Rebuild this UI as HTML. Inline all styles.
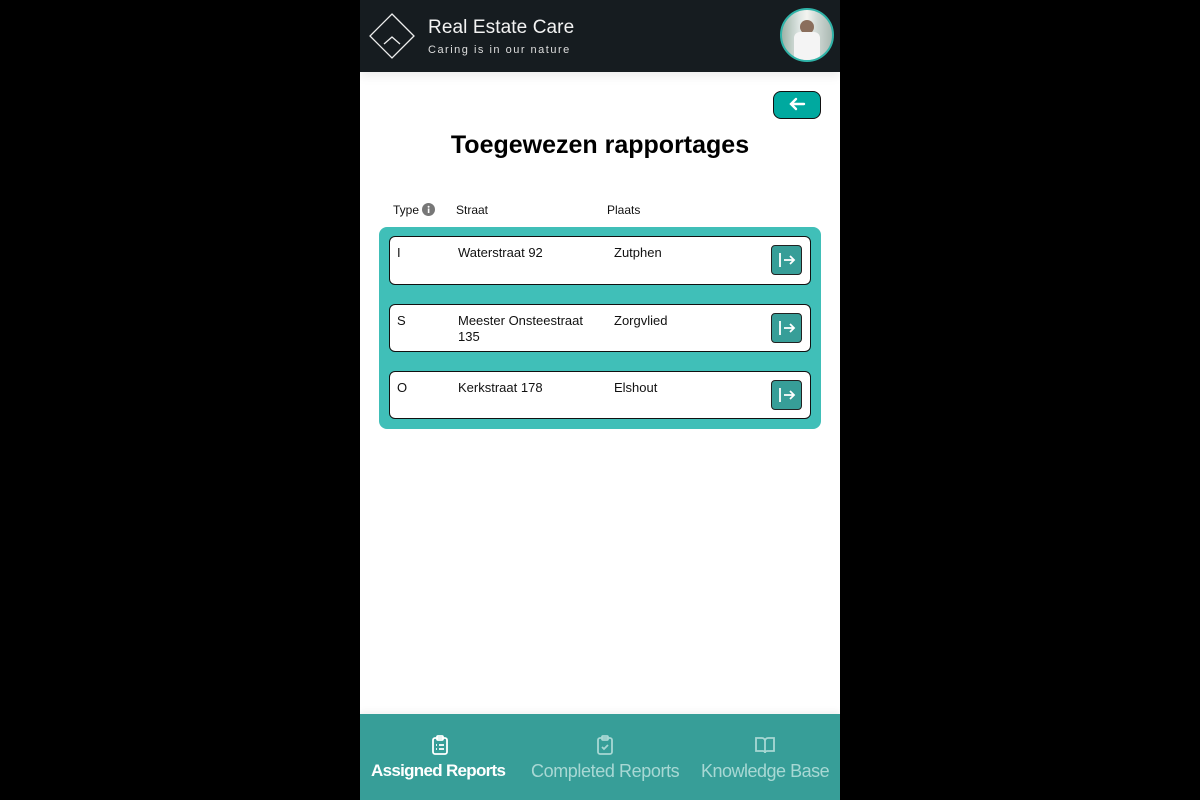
<!DOCTYPE html>
<html><head><style>
body{margin:0;background:#000;width:1200px;height:800px;overflow:hidden;font-family:"Liberation Sans",sans-serif}
#app{position:absolute;left:360px;top:0;width:480px;height:800px;background:#fff}
.hdr{position:absolute;left:0;top:0;width:480px;height:72px;background:#161c20;box-shadow:0 4px 10px rgba(0,0,0,.08)}
.t1{position:absolute;left:68px;top:17px;color:#f2f2f2;font-size:19px;letter-spacing:.1px}
.t2{position:absolute;left:68px;top:44px;color:#ddd;font-size:11px;letter-spacing:1.5px}
.av{position:absolute;left:420px;top:8px;width:50px;height:50px;border-radius:50%;border:2px solid #2fb3a8;background:linear-gradient(90deg,#9fb3a8 0%,#dfe6e3 35%,#f4f4f0 50%,#cfd8d4 70%,#aab9b2 100%);overflow:hidden}
.back{position:absolute;left:413px;top:91px;width:46px;height:26px;border:1px solid #111;border-radius:8px;background:#00a99f}
h1{position:absolute;left:0;width:480px;top:131px;margin:0;text-align:center;font-size:25px;font-weight:bold;letter-spacing:0}
.th{position:absolute;top:203px;font-size:12px;color:#111}
.box{position:absolute;left:19px;top:227px;width:442px;height:202px;background:#40bfb8;border-radius:8px}
.row{position:absolute;left:10px;width:420px;background:#fff;border:1px solid #111;border-radius:6px}
.row span{position:absolute;top:8px;font-size:13px;color:#111;line-height:16px}
.go{position:absolute;left:381px;top:8px;width:31px;height:30px;background:#379e98;border:1px solid #222;border-radius:4px;box-sizing:border-box}
.nav{position:absolute;left:0;top:714px;width:480px;height:86px;background:#379e98;box-shadow:0 -3px 6px rgba(0,0,0,.05)}
.ni{position:absolute;top:47px;font-size:18px;color:#a8d8d4;white-space:nowrap}
</style></head><body><div id="app">
<div class="hdr">
<svg style="position:absolute;left:8px;top:12px" width="48" height="48" viewBox="0 0 48 48" fill="none" stroke="#eee" stroke-width="1.3"><path d="M24 2 L46 24 L24 46 L2 24 Z"/><path d="M16 32 L24 25 L32 32"/></svg>
<div class="t1">Real Estate Care</div><div class="t2">Caring is in our nature</div>
<div class="av"><div style="position:absolute;left:18px;top:10px;width:14px;height:14px;border-radius:50%;background:#8a6e5c"></div><div style="position:absolute;left:12px;top:22px;width:26px;height:30px;background:#f4f4f4;border-radius:6px 6px 0 0"></div></div>
</div>
<div class="back"><svg width="46" height="26" viewBox="0 0 46 26" fill="none" stroke="#fff" stroke-width="2.4" stroke-linecap="round"><path d="M17 12h13M22 7l-5 5 5 5"/></svg></div>
<h1>Toegewezen rapportages</h1>
<div class="th" style="left:33px">Type <svg width="13" height="13" viewBox="0 0 13 13" style="vertical-align:-2px"><circle cx="6.5" cy="6.5" r="6.5" fill="#777"/><rect x="5.8" y="5.5" width="1.6" height="4.5" fill="#fff"/><circle cx="6.6" cy="3.7" r="1" fill="#fff"/></svg></div>
<div class="th" style="left:96px">Straat</div><div class="th" style="left:247px">Plaats</div>
<div class="box">
<div class="row" style="top:9px;height:47px"><span style="left:7px">I</span><span style="left:68px">Waterstraat 92</span><span style="left:224px">Zutphen</span><div class="go"><svg width="29" height="28" viewBox="0 0 29 28" fill="none" stroke="#fff" stroke-width="1.8"><path d="M8 7v14M12 14h10M18 10l4 4-4 4"/></svg></div></div>
<div class="row" style="top:77px;height:46px"><span style="left:7px">S</span><span style="left:68px">Meester Onsteestraat<br>135</span><span style="left:224px">Zorgvlied</span><div class="go"><svg width="29" height="28" viewBox="0 0 29 28" fill="none" stroke="#fff" stroke-width="1.8"><path d="M8 7v14M12 14h10M18 10l4 4-4 4"/></svg></div></div>
<div class="row" style="top:144px;height:46px"><span style="left:7px">O</span><span style="left:68px">Kerkstraat 178</span><span style="left:224px">Elshout</span><div class="go"><svg width="29" height="28" viewBox="0 0 29 28" fill="none" stroke="#fff" stroke-width="1.8"><path d="M8 7v14M12 14h10M18 10l4 4-4 4"/></svg></div></div>
</div>
<div class="nav">
<svg style="position:absolute;left:70px;top:20px" width="20" height="22" viewBox="0 0 20 22" fill="none" stroke="#fff" stroke-width="1.8"><rect x="3" y="4" width="14" height="16" rx="2"/><rect x="7" y="2" width="6" height="4" rx="1"/><path d="M6 11h1M9 11h5M6 15h1M9 15h5"/></svg>
<svg style="position:absolute;left:235px;top:20px" width="20" height="22" viewBox="0 0 20 22" fill="none" stroke="#a8d8d4" stroke-width="1.8"><rect x="3" y="4" width="14" height="16" rx="2"/><rect x="7" y="2" width="6" height="4" rx="1"/><path d="M7 13l2 2 4-4"/></svg>
<svg style="position:absolute;left:394px;top:20px" width="22" height="22" viewBox="0 0 22 22" fill="none" stroke="#a8d8d4" stroke-width="1.8"><path d="M2 4h6a3 3 0 0 1 3 3v12a2 2 0 0 0-2-2H2zM20 4h-6a3 3 0 0 0-3 3v12a2 2 0 0 1 2-2h7z"/></svg>
<div class="ni" style="left:11px;color:#fff;font-weight:bold;font-size:17px;letter-spacing:-.7px">Assigned Reports</div>
<div class="ni" style="left:171px;letter-spacing:-.4px">Completed Reports</div>
<div class="ni" style="left:341px;letter-spacing:-.5px">Knowledge Base</div>
</div>
</div></body></html>
